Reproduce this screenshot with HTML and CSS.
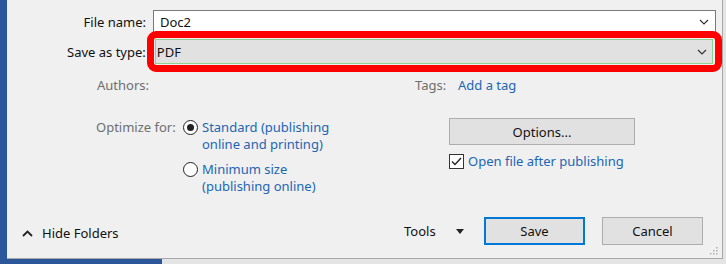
FILE: index.html
```html
<!DOCTYPE html>
<html lang="en">
<head>
	<meta charset="UTF-8">
	<title>Publish as PDF</title>
	<link rel="stylesheet" href="styles.css">
</head>
<body>
	<div class="desk">
		<div class="strip"></div>
		<div class="dialog">
			<div class="row-file">
				<div class="lab">File name:</div>
				<div class="combo">
					<span>Doc2</span>
					<svg class="chev" width="10" height="6" viewBox="0 0 10 6"><path d="M1 1 L5 5 L9 1" fill="none" stroke="#333" stroke-width="1.2"/></svg>
				</div>
			</div>
			<div class="row-type">
				<div class="lab">Save as type:</div>
				<div class="redbox">
					<div class="select">
						<span>PDF</span>
						<svg class="chev" width="10" height="6" viewBox="0 0 10 6"><path d="M1 1 L5 5 L9 1" fill="none" stroke="#333" stroke-width="1.2"/></svg>
					</div>
				</div>
			</div>
			<div class="row-meta">
				<div class="authors dim">Authors:</div>
				<div class="tags dim">Tags:</div>
				<div class="link">Add a tag</div>
			</div>
			<div class="row-opt">
				<div class="opt-left">
					<div class="opt-label dim">Optimize for:</div>
					<div class="radios">
						<div class="radio">
							<span class="circle on"></span>
							<span class="link">Standard (publishing<br>online and printing)</span>
						</div>
						<div class="radio">
							<span class="circle"></span>
							<span class="link">Minimum size<br>(publishing online)</span>
						</div>
					</div>
				</div>
				<div class="opt-right">
					<div class="btn options">Options...</div>
					<div class="check">
						<svg class="box" width="15" height="15" viewBox="0 0 15 15"><rect x="0.5" y="0.5" width="14" height="14" fill="#fff" stroke="#333"/><path d="M3 7.5 L6 10.5 L12 4" fill="none" stroke="#222" stroke-width="1.4"/></svg>
						<span class="link">Open file after publishing</span>
					</div>
				</div>
			</div>
			<div class="bottom">
				<div class="hide">
					<svg width="11" height="7" viewBox="0 0 11 7"><path d="M1 6 L5.5 1.5 L10 6" fill="none" stroke="#222" stroke-width="1.8"/></svg>
					<span>Hide Folders</span>
				</div>
				<div class="tools">Tools</div>
				<svg class="tri" width="8" height="5" viewBox="0 0 8 5"><path d="M0 0 H8 L4 5 Z" fill="#222"/></svg>
				<div class="btn save">Save</div>
				<div class="btn cancel">Cancel</div>
			</div>
			<svg class="grip" width="8" height="8" viewBox="0 0 8 8" fill="#b0b0b0"><rect x="6" y="0" width="1.5" height="1.5"/><rect x="3" y="3" width="1.5" height="1.5"/><rect x="6" y="3" width="1.5" height="1.5"/><rect x="0" y="6" width="1.5" height="1.5"/><rect x="3" y="6" width="1.5" height="1.5"/><rect x="6" y="6" width="1.5" height="1.5"/></svg>
		</div>
	</div>
	<div class="under"></div>
</body>
</html>
```

FILE: styles.css
```css
* {
	box-sizing: border-box;
}
body {
	margin: 0;
	width: 726px;
	height: 264px;
	overflow: hidden;
	background: #e4e4e4;
	font-family: "Noto Sans", sans-serif;
	font-size: 13px;
	color: #111;
}
.desk {
	display: flex;
	height: 259px;
}
.strip {
	width: 7px;
	background: #2b579a;
}
.dialog {
	position: relative;
	width: 716px;
	height: 259px;
	background: #f0f0f0;
	border-right: 1px solid #a8a8a8;
	border-bottom: 1px solid #a8a8a8;
	padding-top: 10px;
	display: flex;
	flex-direction: column;
}
.under {
	width: 162px;
	height: 5px;
	background: #2b579a;
}
.lab {
	width: 140px;
	text-align: right;
	padding-right: 1px;
}
.row-file {
	display: flex;
	align-items: center;
	height: 24px;
}
.combo {
	margin-left: 6px;
	width: 563px;
	height: 24px;
	background: #fff;
	border: 1px solid #7a7a7a;
	display: flex;
	align-items: center;
	justify-content: space-between;
	padding: 0 6px 0 6px;
}
.row-type {
	position: relative;
	z-index: 1;
	display: flex;
	align-items: center;
	height: 41px;
	margin-top: -3px;
}
.redbox {
	width: 576px;
	height: 41px;
	border: 7px solid #f00;
	border-radius: 9px;
	padding: 1px 2px 1px 1px;
}
.select {
	height: 25px;
	background: #e1e1e1;
	border: 1px solid #8ed08e;
	display: flex;
	align-items: center;
	justify-content: space-between;
	padding: 0 5px 0 1px;
}
.dim {
	color: #6e6e6e;
}
.link {
	color: #2166b3;
}
.row-meta {
	display: flex;
	margin-top: 4px;
	height: 18px;
	line-height: 18px;
}
.authors {
	margin-left: 90px;
	width: 318px;
}
.tags {
	width: 43px;
}
.row-opt {
	display: flex;
	margin-top: 24px;
}
.opt-left {
	display: flex;
	width: 442px;
	padding-left: 89px;
}
.opt-label {
	width: 87px;
	line-height: 17px;
	margin-top: 1px;
}
.radios {
	display: flex;
	flex-direction: column;
	gap: 8px;
}
.radio {
	display: flex;
	line-height: 17px;
	margin-top: 0;
}
.radio:first-child {
	margin-top: 1px;
}
.circle {
	width: 15px;
	height: 15px;
	margin: 1px 4px 0 0;
	border: 1px solid #222;
	border-radius: 50%;
	background: #fff;
	display: flex;
	align-items: center;
	justify-content: center;
	flex-shrink: 0;
}
.circle.on::after {
	content: "";
	width: 7px;
	height: 7px;
	border-radius: 50%;
	background: #222;
}
.btn {
	height: 28px;
	background: #e1e1e1;
	border: 1px solid #adadad;
	display: flex;
	align-items: center;
	justify-content: center;
}
.options {
	width: 186px;
	height: 27px;
}
.check {
	display: flex;
	align-items: center;
	margin-top: 8px;
	line-height: 17px;
}
.check .box {
	margin-right: 4px;
}
.bottom {
	margin-top: auto;
	margin-bottom: 13px;
	display: flex;
	align-items: center;
	height: 28px;
}
.hide {
	display: flex;
	align-items: center;
	margin-left: 15px;
	width: 382px;
	margin-top: 4px;
}
.hide svg {
	margin-right: 9px;
}
.tools {
	width: 52px;
}
.tri {
	margin-right: 20px;
}
.save {
	width: 101px;
	border: 2px solid #0078d7;
}
.cancel {
	width: 101px;
	margin-left: 17px;
}
.grip {
	position: absolute;
	right: 4px;
	bottom: 3px;
}
```
